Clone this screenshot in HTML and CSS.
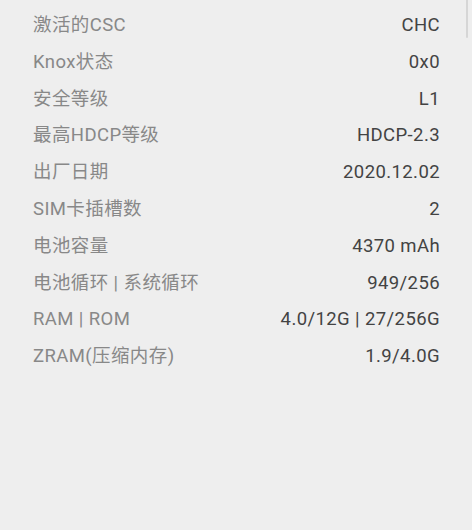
FILE: index.html
```html
<!DOCTYPE html>
<html>
<head>
  <meta charset="UTF-8">
  <title>设备信息</title>
  <link rel="stylesheet" href="styles.css">
</head>
<body>

<div class="info-list">
  <div class="info-row"><span class="label">激活的CSC</span><span class="value">CHC</span></div>
  <div class="info-row"><span class="label">Knox状态</span><span class="value">0x0</span></div>
  <div class="info-row"><span class="label">安全等级</span><span class="value">L1</span></div>
  <div class="info-row"><span class="label">最高HDCP等级</span><span class="value">HDCP-2.3</span></div>
  <div class="info-row"><span class="label">出厂日期</span><span class="value">2020.12.02</span></div>
  <div class="info-row"><span class="label">SIM卡插槽数</span><span class="value">2</span></div>
  <div class="info-row"><span class="label">电池容量</span><span class="value">4370 mAh</span></div>
  <div class="info-row"><span class="label">电池循环 | 系统循环</span><span class="value">949/256</span></div>
  <div class="info-row"><span class="label">RAM | ROM</span><span class="value">4.0/12G | 27/256G</span></div>
  <div class="info-row"><span class="label">ZRAM(压缩内存)</span><span class="value">1.9/4.0G</span></div>
</div>

<!-- scroll indicator -->
<div class="scroll-thumb"></div>

</body>
</html>
```

FILE: styles.css
```css
html, body {
  height: 100%;
}
body {
  margin: 0;
  background: #eeeeee;
  font-family: Roboto, "Noto Sans CJK SC", sans-serif;
  font-size: 18.5px;
  letter-spacing: 0.4px;
  overflow: hidden;
  position: relative;
}
.info-list {
  padding: 7px 32px 0 33px;
}
.info-row {
  display: flex;
  justify-content: space-between;
  height: 36.8px;
  line-height: 36.8px;
}
.label {
  color: #888888;
}
.value {
  color: #434343;
}
.scroll-thumb {
  position: absolute;
  top: 0;
  right: 4px;
  width: 2px;
  height: 38px;
  background: #d6d6d6;
  border-radius: 0 0 2px 2px;
}
```
